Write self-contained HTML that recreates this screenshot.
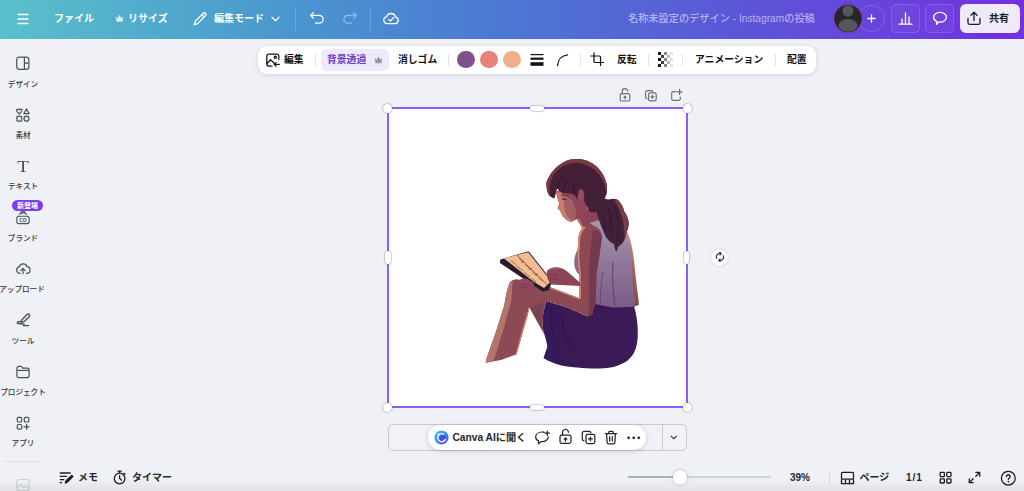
<!DOCTYPE html>
<html lang="ja">
<head>
<meta charset="utf-8">
<title>Canva</title>
<style>
*{box-sizing:border-box;margin:0;padding:0}
html,body{width:1024px;height:491px;overflow:hidden}
body{background:#eff1f6;font-family:"Liberation Sans","Noto Sans CJK JP",sans-serif;color:#0e1318;position:relative}
.abs{position:absolute}
#hdr{position:absolute;left:0;top:0;width:1024px;height:39px;background:linear-gradient(90deg,#5ac0cb 0%,#4a95cf 29%,#4c78d3 49%,#5c55d8 73%,#7330df 100%)}
#hdr .t{position:absolute;color:#fff;font-size:10px;font-weight:700;line-height:14px;white-space:nowrap;top:12.400px}
#hdr svg{position:absolute}
.sb{position:absolute;left:0;width:46px;text-align:center;font-size:7.600px;font-weight:500;color:#33383f;white-space:nowrap;line-height:10px}
.sbi{position:absolute}
#tb{position:absolute;left:258px;top:45.500px;width:558px;height:28px;background:#fff;border-radius:9px;box-shadow:0 1px 5px rgba(60,70,100,.18)}
#tb .t{position:absolute;font-size:9.800px;font-weight:700;line-height:14px;top:7.500px;white-space:nowrap;color:#0e1318}
#tb .sep{position:absolute;top:8px;width:1px;height:12px;background:#e1e3e9}
.hc{position:absolute;width:9px;height:9px;border-radius:50%;background:#fff;box-shadow:0 0 0 .500px rgba(120,128,145,.55),0 0 2px rgba(40,50,70,.3)}
.hp{position:absolute;border-radius:3px;background:#fff;box-shadow:0 0 0 .500px rgba(120,128,145,.5),0 0 2px rgba(40,50,70,.25)}
.bt{position:absolute;font-size:10px;font-weight:700;line-height:14px;white-space:nowrap;color:#25282e}
</style>
</head>
<body>
<!-- HEADER -->
<div id="hdr">
  <svg style="left:17px;top:13px" width="12" height="12" viewBox="0 0 12 12" fill="none" stroke="#fff" stroke-width="1.300" stroke-linecap="round"><path d="M1 1.500h10M1 6h10M1 10.500h10"/></svg>
  <div class="t" style="left:54px">ファイル</div>
  <!-- crown -->
  <svg style="left:115px;top:14px;opacity:.75" width="9" height="9" viewBox="0 0 9 9"><path d="M0.600 2.200 L2.600 4.200 L4.500 0.800 L6.400 4.200 L8.400 2.200 L7.500 7.800 H1.500 Z" fill="#fff"/></svg>
  <div class="t" style="left:128px">リサイズ</div>
  <!-- pencil -->
  <svg style="left:192px;top:11px" width="16" height="16" viewBox="0 0 16 16" fill="none" stroke="#fff" stroke-width="1.250" stroke-linejoin="round" stroke-linecap="round"><path d="M11.300 2.300a1.500 1.500 0 0 1 2.200 2.200L5.700 12.600 2.200 13.700 3.300 10.200Z"/><path d="M9.900 3.800l2.200 2.200"/></svg>
  <div class="t" style="left:214px">編集モード</div>
  <svg style="left:271px;top:16px" width="9" height="6" viewBox="0 0 9 6" fill="none" stroke="#fff" stroke-width="1.300" stroke-linecap="round" stroke-linejoin="round"><path d="M1 1.200l3.500 3.500L8 1.200"/></svg>
  <div class="abs" style="left:295px;top:8px;width:1px;height:23px;background:rgba(255,255,255,.18)"></div>
  <!-- undo -->
  <svg style="left:309px;top:11px" width="16" height="14" viewBox="0 0 16 14" fill="none" stroke="#fff" stroke-width="1.300" stroke-linecap="round" stroke-linejoin="round"><path d="M4.300 1.800L1.700 4.400l2.600 2.600"/><path d="M2 4.400h8.200a3.900 3.900 0 0 1 0 7.800H6.600"/></svg>
  <!-- redo -->
  <svg style="left:342px;top:11px;opacity:.38" width="16" height="14" viewBox="0 0 16 14" fill="none" stroke="#fff" stroke-width="1.300" stroke-linecap="round" stroke-linejoin="round"><path d="M11.700 1.800l2.600 2.600-2.600 2.600"/><path d="M14 4.400H5.800a3.900 3.900 0 0 0 0 7.800h3.600"/></svg>
  <div class="abs" style="left:370px;top:8px;width:1px;height:23px;background:rgba(255,255,255,.18)"></div>
  <!-- cloud check -->
  <svg style="left:382px;top:11px" width="18" height="15" viewBox="0 0 18 15" fill="none" stroke="#fff" stroke-width="1.300" stroke-linecap="round" stroke-linejoin="round"><path d="M5.200 12.600a3.400 3.400 0 0 1-.6-6.750 4.600 4.600 0 0 1 8.900.2 3.300 3.300 0 0 1-.4 6.550z"/><path d="M6.700 8.400l1.700 1.700 3.300-3.600"/></svg>
  <div class="t" style="left:628px;font-weight:500;font-size:10.200px;color:rgba(255,255,255,.55)">名称未設定のデザイン - Instagramの投稿</div>
  <!-- plus circle -->
  <div class="abs" style="left:858px;top:5px;width:27px;height:27px;border-radius:50%;border:1px solid rgba(255,255,255,.16)"></div>
  <svg style="left:867px;top:14px" width="9" height="9" viewBox="0 0 9 9" stroke="#fff" stroke-width="1.300" stroke-linecap="round"><path d="M4.500 .8v7.400M.8 4.500h7.400"/></svg>
  <!-- avatar -->
  <svg style="left:833px;top:4px" width="30" height="30" viewBox="0 0 30 30"><defs><clipPath id="avc"><circle cx="15" cy="14.500" r="13.400"/></clipPath></defs><circle cx="15" cy="14.500" r="14" fill="#6a2748"/><circle cx="15" cy="14.500" r="13.300" fill="#25262b"/><g clip-path="url(#avc)" fill="#55565b"><ellipse cx="15" cy="7" rx="5.600" ry="5.800"/><ellipse cx="15" cy="21.500" rx="9.500" ry="6.500"/></g></svg>
  <!-- chart btn -->
  <div class="abs" style="left:891px;top:4px;width:29px;height:29px;border-radius:5px;border:1px solid rgba(255,255,255,.14);background:rgba(255,255,255,.04)"></div>
  <svg style="left:898px;top:11px" width="15" height="15" viewBox="0 0 15 15" fill="none" stroke="#fff" stroke-width="1.300" stroke-linecap="round"><path d="M1 13.200h13M4 12.500V8M7.500 12.500V2M11 12.500V6"/></svg>
  <!-- comment btn -->
  <div class="abs" style="left:925px;top:4px;width:29px;height:29px;border-radius:5px;border:1px solid rgba(255,255,255,.14);background:rgba(255,255,255,.04)"></div>
  <svg style="left:932px;top:11px" width="16" height="15" viewBox="0 0 16 15" fill="none" stroke="#fff" stroke-width="1.300" stroke-linejoin="round"><path d="M8 1.300c3.600 0 6.400 2.100 6.400 4.900S11.600 11.100 8 11.100c-.5 0-1-.05-1.500-.13L4.600 13.400v-3C2.800 9.500 1.600 8 1.600 6.200 1.600 3.400 4.400 1.300 8 1.300z"/></svg>
  <!-- share btn -->
  <div class="abs" style="left:960px;top:4px;width:60px;height:29px;border-radius:6px;background:#efe9fb"></div>
  <svg style="left:966px;top:11px" width="16" height="15" viewBox="0 0 16 15" fill="none" stroke="#1a1d22" stroke-width="1.300" stroke-linecap="round" stroke-linejoin="round"><path d="M8 9.500V1.500M5 4.300l3-3 3 3"/><path d="M2 7.500v4.300a1.500 1.500 0 0 0 1.500 1.500h9a1.500 1.500 0 0 0 1.500-1.500V7.500"/></svg>
  <div class="t" style="left:989px;color:#1a1d22">共有</div>
</div>

<!-- SIDEBAR -->
<svg class="sbi" style="left:15px;top:55px" width="16" height="16" viewBox="0 0 16 16" fill="none" stroke="#4b5058" stroke-width="1.200" stroke-linejoin="round"><rect x="1.700" y="2.100" width="12.200" height="12.200" rx="2.600"/><path d="M9.400 2.100v12.200M9.400 8.200h4.500"/></svg>
<div class="sb" style="top:79.7px">デザイン</div>
<svg class="sbi" style="left:15px;top:107px" width="16" height="16" viewBox="0 0 16 16" fill="none" stroke="#4b5058" stroke-width="1.200" stroke-linejoin="round"><path d="M4.300 7L2 4.600C1.100 3.600 1.500 2.200 2.700 2.100 3.400 2 4 2.400 4.300 3 4.600 2.400 5.200 2 5.900 2.100 7.100 2.200 7.500 3.600 6.600 4.600Z"/><path d="M11.500 2L14.200 6.600H8.800Z"/><rect x="1.900" y="9.300" width="4.800" height="4.800" rx=".6"/><circle cx="11.500" cy="11.700" r="2.500"/></svg>
<div class="sb" style="top:130.7px">素材</div>
<div class="sbi" style="left:13px;top:157.500px;width:20px;text-align:center;font-family:'Liberation Serif',serif;font-size:16.500px;line-height:18px;color:#4b5058;transform:scaleX(1.160)">T</div>
<div class="sb" style="top:181.7px">テキスト</div>
<div class="abs" style="left:12px;top:200px;width:31px;height:11px;border-radius:6px;background:#7d3cf0;color:#fff;font-size:7px;font-weight:700;line-height:11px;text-align:center;white-space:nowrap">新登場</div>
<svg class="sbi" style="left:15px;top:210px" width="16" height="15" viewBox="0 0 16 15" fill="none" stroke="#4b5058" stroke-width="1.100" stroke-linejoin="round" stroke-linecap="round"><rect x="1.800" y="6.200" width="12.400" height="7.400" rx="2.200"/><path d="M4.200 4.400a6.500 6.500 0 0 1 7.600 0M5.600 2.300a5 5 0 0 1 4.800 0"/><text x="8" y="11.900" text-anchor="middle" font-family="Liberation Sans,sans-serif" font-size="5" font-weight="700" fill="#4b5058" stroke="none">CO</text></svg>
<div class="sb" style="top:233.7px">ブランド</div>
<svg class="sbi" style="left:15px;top:261px" width="16" height="15" viewBox="0 0 16 15" fill="none" stroke="#4b5058" stroke-width="1.200" stroke-linejoin="round" stroke-linecap="round"><path d="M5 12.400a3.300 3.300 0 0 1-.8-6.500 4 4 0 0 1 7.700-.2 3.300 3.300 0 0 1-.3 6.600"/><path d="M8 12.800V7.600M5.800 9.600L8 7.400l2.200 2.200"/></svg>
<div class="sb" style="top:284.7px;left:-1px">アップロード</div>
<svg class="sbi" style="left:15px;top:312px" width="17" height="16" viewBox="0 0 17 16" fill="none" stroke="#4b5058" stroke-width="1.350" stroke-linejoin="round" stroke-linecap="round"><path d="M12.300 2.300a1.500 1.500 0 0 1 2.100 2.100L9 9.800 6.400 10.400 7 7.800Z"/><path d="M6.600 9.600C4 9.400 2.200 9.800 2.200 10.800c0 1.600 4.500 .4 6.500 1.400.9 .5 .5 1.400-.3 1.400H13.600"/></svg>
<div class="sb" style="top:336.7px">ツール</div>
<svg class="sbi" style="left:15px;top:364px" width="16" height="15" viewBox="0 0 16 15" fill="none" stroke="#4b5058" stroke-width="1.200" stroke-linejoin="round"><path d="M1.900 4.400a2 2 0 0 1 2-2h2.200l1.600 1.800h4.400a2 2 0 0 1 2 2v5.400a2 2 0 0 1-2 2H3.900a2 2 0 0 1-2-2z"/><path d="M1.900 6.400h12.200"/></svg>
<div class="sb" style="top:387.7px">プロジェクト</div>
<svg class="sbi" style="left:15px;top:415px" width="16" height="16" viewBox="0 0 16 16" fill="none" stroke="#4b5058" stroke-width="1.200" stroke-linejoin="round" stroke-linecap="round"><rect x="2.200" y="2.400" width="4.600" height="4.600" rx="1.300"/><rect x="9.300" y="2.400" width="4.600" height="4.600" rx="1.300"/><rect x="2.200" y="9.500" width="4.600" height="4.600" rx="1.300"/><path d="M11.600 9.300v5M9.100 11.800h5"/></svg>
<div class="sb" style="top:438.7px">アプリ</div>
<div class="abs" style="left:4px;top:461px;width:37px;height:1px;background:#dcdfe6"></div>
<svg class="sbi" style="left:15px;top:477px;opacity:.2" width="16" height="15" viewBox="0 0 16 15" fill="none" stroke="#4b5058" stroke-width="1.200" stroke-linejoin="round"><rect x="1.800" y="2.500" width="12.400" height="11" rx="2"/><path d="M2 11l3.500-3.500 3 3 2-2 3.500 3.500"/></svg>

<!-- TOOLBAR -->
<div id="tb">
  <svg class="abs" style="left:7px;top:6px" width="16" height="16" viewBox="0 0 16 16" fill="none" stroke="#0e1318" stroke-width="1.250" stroke-linejoin="round" stroke-linecap="round"><path d="M13.800 7.500V4a2 2 0 0 0-2-2H3.800a2 2 0 0 0-2 2v8a2 2 0 0 0 2 2H7"/><circle cx="10.300" cy="5.300" r="1.100"/><path d="M2 11.500l3.600-3.800 3.600 3.600"/><path d="M9.300 12.300h5M11 10.600l-1.800 1.700 1.800 1.700"/></svg>
  <div class="t" style="left:26px">編集</div>
  <div class="sep" style="left:57px"></div>
  <div class="abs" style="left:63px;top:3px;width:68px;height:22px;border-radius:5px;background:#efe9fd"></div>
  <div class="t" style="left:69px;color:#6a3fc4">背景透過</div>
  <svg class="abs" style="left:116px;top:10px" width="9" height="8" viewBox="0 0 9 8"><path d="M0.600 1.700 L2.600 3.700 L4.500 0.500 L6.400 3.700 L8.400 1.700 L7.500 7.200 H1.500 Z" fill="#9a94aa"/></svg>
  <div class="t" style="left:140px">消しゴム</div>
  <div class="sep" style="left:190px"></div>
  <div class="abs" style="left:199.2px;top:5.200px;width:17.600px;height:17.600px;border-radius:50%;background:#82508a"></div>
  <div class="abs" style="left:222.2px;top:5.200px;width:17.600px;height:17.600px;border-radius:50%;background:#e8837a"></div>
  <div class="abs" style="left:245.2px;top:5.200px;width:17.600px;height:17.600px;border-radius:50%;background:#f0b08a"></div>
  <svg class="abs" style="left:272px;top:7px" width="14" height="14" viewBox="0 0 14 14" fill="#0e1318"><rect x=".5" y="1" width="13" height="1.200"/><rect x=".5" y="4.600" width="13" height="2.200"/><rect x=".5" y="9.200" width="13" height="3.600"/></svg>
  <svg class="abs" style="left:298px;top:7px" width="14" height="14" viewBox="0 0 14 14" fill="none" stroke="#0e1318" stroke-width="1.300" stroke-linecap="round"><path d="M1.600 12.600C2 6.600 5.800 2.400 11.600 1.800"/></svg>
  <div class="sep" style="left:322px"></div>
  <svg class="abs" style="left:332px;top:6.500px" width="14.500" height="14.500" viewBox="0 0 16 16" fill="none" stroke="#0e1318" stroke-width="1.350" stroke-linecap="round" stroke-linejoin="round"><path d="M4.400 1v9.400a1.200 1.200 0 0 0 1.200 1.200H15"/><path d="M1 4.400h9.400a1.200 1.200 0 0 1 1.200 1.200V15"/></svg>
  <div class="t" style="left:359px">反転</div>
  <div class="sep" style="left:390px"></div>
  <svg class="abs" style="left:400px;top:6px" width="15" height="15" viewBox="0 0 15 15"><g fill="#0e1318"><rect x="0" y="0" width="3" height="3"/><rect x="0" y="6" width="3" height="3"/><rect x="0" y="12" width="3" height="3"/><rect x="3" y="3" width="3" height="3" opacity=".8"/><rect x="3" y="9" width="3" height="3" opacity=".8"/><rect x="6" y="0" width="3" height="3" opacity=".5"/><rect x="6" y="6" width="3" height="3" opacity=".5"/><rect x="6" y="12" width="3" height="3" opacity=".5"/><rect x="9" y="3" width="3" height="3" opacity=".28"/><rect x="9" y="9" width="3" height="3" opacity=".28"/><rect x="12" y="0" width="3" height="3" opacity=".12"/><rect x="12" y="6" width="3" height="3" opacity=".12"/><rect x="12" y="12" width="3" height="3" opacity=".12"/></g></svg>
  <div class="sep" style="left:424px"></div>
  <div class="t" style="left:437px">アニメーション</div>
  <div class="sep" style="left:517px"></div>
  <div class="t" style="left:529px">配置</div>
</div>

<!-- CANVAS -->
<div class="abs" id="cv" style="left:387px;top:107px;width:301px;height:301px;background:#fff;border:2px solid #8f5bfa"></div>
<!--ILLUS-START-->
<svg class="abs" style="left:470px;top:150px;filter:blur(.350px)" width="190" height="230" viewBox="470 150 190 230">
<defs>
<linearGradient id="topg" x1="0" y1="0" x2="0" y2="1"><stop offset="0" stop-color="#a697b0"/><stop offset=".45" stop-color="#8f7a9b"/><stop offset="1" stop-color="#7b5c87"/></linearGradient>
<linearGradient id="skg" x1="0" y1="0" x2="1" y2="0"><stop offset="0" stop-color="#35195c"/><stop offset=".35" stop-color="#3a1a52"/><stop offset="1" stop-color="#3b1b58"/></linearGradient>
<linearGradient id="bsg" x1="0" y1="0" x2="0" y2="1"><stop offset="0" stop-color="#d39a88"/><stop offset=".5" stop-color="#a8665c"/><stop offset="1" stop-color="#864848"/></linearGradient>
</defs>
<!-- back skin strip (behind top) -->
<path d="M622 226 C627 229.500 630 236 632.500 250 C634.500 262 635.500 278 638.600 300 L638.800 305 L634 306.500 L629 260 Z" fill="url(#bsg)"/>
<!-- neck -->
<path d="M576 218 L586 209 L598 206 L600 228 L584 231 L581 226 Z" fill="#8c4558"/>
<path d="M576.500 218.500 L582 227.500 L583.500 227 L578.500 218 Z" fill="#c9786a"/>
<!-- top -->
<path d="M589.500 223 L598 220.500 L622 224 C627 231 629.500 242 631 258 C632 270 632.500 282 633.500 292 L635 307.300 L613 308 L594.500 304.500 L596.500 274 L599.500 256 L602 238 C600 231 595 226 589.500 223 Z" fill="url(#topg)"/>
<path d="M613 262 C612 278 613 292 615 306" fill="none" stroke="#5f3c6a" stroke-width=".9"/>
<path d="M603 272 C601 284 600 294 600.500 304" fill="none" stroke="#62406e" stroke-width=".8"/>
<!-- chest bump -->
<path d="M579 248 C575.500 252 574 258 574.300 264 C574.600 269 577 273 579.500 275 L581 262 Z" fill="#8a6792"/>
<!-- skirt -->
<path d="M546 301 L567.500 307.500 L587.600 316.600 L595 304 L613 307.500 L634 306.800 C636.500 314 637.800 324 637.800 333 C637.800 341.500 636.500 349 633 354.500 C630 359 626 362 622 363.800 C617 366.500 610 368 604 368.300 C597 368.600 590 368.500 586 368.200 C575 367.600 562 366 558 364.500 C552 362.500 546 360 543.500 358 C545 353 547 349 547.300 346 C546 338 543 332 542.700 326 C542.400 320 543 314 543.700 311 Z" fill="url(#skg)"/>
<path d="M551 306 C549 318 551 330 556 340 M561 312 C562 326 566 338 572 348" fill="none" stroke="#2a1246" stroke-width="1.100"/>
<!-- far thigh (dark) -->
<path d="M528.500 306 L546 300 L543.700 311 C543 316 542.400 322 542.700 326 L544 334 Z" fill="#7a4152"/>
<!-- leg / shin -->
<path d="M509.400 282.700 C511 280.500 514 279.300 517 279.300 L534 283 L547 300.500 L528.900 308 L528 314.400 L523.200 330.700 L516.600 354.300 L501 360 L485.700 362.800 L486.500 358.400 L496.300 330.700 L504.400 304.700 C505.500 297 507 290 509.400 282.700 Z" fill="#8c4a54"/>
<path d="M509.400 282.700 C507 290 505.500 297 504.400 304.700 L496.300 330.700 L486.500 358.400 L485.700 362.800 L493.500 361.300 L503 331 L511.500 300 C512 293 512 287 512.500 281 Z" fill="#b4746c"/>
<path d="M528.900 308 L528 314.400 L523.200 330.700 L516.600 354.300 L515.300 354.700 L522 330 L527 313 Z" fill="#cf7f63"/>
<!-- near arm -->
<path d="M584 226.500 C588 224.500 594 225 598 228 C601 231 602.500 234.500 602 238 L599.500 256 L596.600 274 L595.700 299.700 L595 304 L592.200 314.800 L587.600 316.600 L567.500 307.500 L546 301 L534 292 L520.500 290 L518.500 282 L524 279.500 L535 282 L551 287.500 L579.400 298.300 L579.200 274 L577.400 255.800 L578.300 237.500 C579 232.500 581 229 584 226.500 Z" fill="#8c4853"/>
<path d="M593 229.500 C597 229 600.500 232 602 238 L599.500 256 L596.600 274 L595.700 299.700 L595 304 L592.200 314.800 L588.500 315.500 L589.500 296 L589 272 L590.500 250 Z" fill="#733a4c"/>
<path d="M584 226.500 C581 229 579 232.500 578.300 237.500 L577.400 255.800 L579.200 274 L579.400 298.300 L581 298.800 L580.800 274 L579.200 256 L580.300 238 C581 233 583 229.500 586 227.500 Z" fill="#d28a6c"/>
<path d="M535 282 L551 287.500 L579.400 298.300 L580 299.800 L551 289 L535 283.300 Z" fill="#c47866"/>
<!-- tablet -->
<path d="M500.300 259.400 L528.600 251.200 L552.200 281 L549 290 L543 291.800 L531.300 284 L500 263 Z" fill="#2a1c2c"/>
<path d="M503.800 258.300 L528.200 252.300 L551.200 281.200 L544 288 L533.100 281.200 Z" fill="#f2bd92"/>
<path d="M517 255.300 L547 284.500" stroke="#5a3a3a" stroke-width=".7" fill="none"/>
<path d="M511 260.500l5.500 4.400M519 258.500l5 4.300M517 266l6 5M525 264.500l5.500 4.800M524 272l6 5M532 271.500l5 4.500M531 278l5 4M538.500 277.500l4.500 4M521 262.500l3 -1M529 269.500l3 -1M535 275l3 -1" stroke="#7a4a3e" stroke-width=".7" fill="none"/>
<!-- far hand on tablet right -->
<path d="M546.800 271 C549 268 553 266.800 557 267.200 C561 267.600 564 269 567 271.200 L580.500 283 L580.500 286 L551 284.400 C548.500 282 546.500 277 546.800 271 Z" fill="#8c4558"/>
<path d="M547.200 271.200 C550 268.600 554 267.600 558 268" stroke="#c9786a" stroke-width=".8" fill="none"/>
<path d="M549 274.500l8 1.800M550 278l8 1.600" stroke="#5c2b42" stroke-width=".6" fill="none"/>
<!-- near hand fingers -->
<path d="M519 280.500 C521.500 278.200 525 278 528 279.200 L534 283 L533 291 L524 292.500 C520.500 291 518.300 287 519 280.500 Z" fill="#91485a"/>
<path d="M520.500 283.500l7 1.500M521 286.500l6.500 1.200" stroke="#5c2b42" stroke-width=".6" fill="none"/>
<!-- face -->
<path d="M555.700 192 L556.800 194.800 L557.800 199 L559.300 203.400 L557.700 208.300 L560 210.500 L561.400 213.300 L562.500 216 L566.400 219.800 L570.700 221.900 L577.600 218.700 L587 211 L587 188 L570 184 Z" fill="#8f4659"/>
<path d="M555.700 192 L556.800 194.800 L557.800 199 L559.300 203.400 L557.700 208.300 L560 210.500 L561.400 213.300 L562.500 216 L566.400 219.800 L570.700 221.900 L575.500 219.500 L576 210 L573 201 L566 196 L560.500 191.500 Z" fill="#a55e62"/>
<path d="M555.700 192 L556.800 194.800 L557.800 199 L559.300 203.400 L557.700 208.300 L560 210.500 L561.400 213.300 L562.500 216 L566.400 219.800 L570.700 221.900 L573 221 L568.500 217.800 L566 214 L564.800 210 L564 206 L564.500 202 L562.500 197.500 L561.500 192.500 Z" fill="#c97d6d"/>
<path d="M561.600 198.300 C563 199.900 565 200 566.500 199.200" stroke="#3a1830" stroke-width="1" fill="none"/>
<path d="M560.500 195.400 C562.500 194.500 565 194.600 567 195.500" stroke="#4a2236" stroke-width=".7" fill="none"/>
<!-- ear -->
<path d="M579 190.500 C581.500 189 584 190.500 584 194 C584 197.500 582 201 579.500 201.500 C578 199 577.800 193 579 190.500 Z" fill="#9a4c5c"/>
<!-- ponytail -->
<path d="M597 200 C600 197 603 198 605 198.500 C607 199.500 608.500 199.500 610 199.300 C612 198.600 614.500 198.600 616.400 199.300 C618.500 200.200 619.800 201.800 620.600 203.500 C622.500 205.500 623.500 208.500 624.200 211.400 C626 213.500 627.200 216 627.700 218.500 C628.800 221 628.900 223.500 628.500 225.600 C628.300 228.500 627.300 230.800 626.300 232.700 C626 235.500 625.200 238 624.200 239.900 C623.300 242 622 243.600 620.600 244.800 C619.800 245.800 618.800 246.600 617.800 247 C617.800 248.800 617.200 250.500 616.400 251.500 C615.700 251 615.200 250 614.900 249.100 C614.400 247.500 614.200 245.800 614.200 244.100 C611.500 243 609 241 607.100 238.400 C605.500 236.500 604.200 234 603.500 231.300 C602 228.500 600.800 225.600 600 222.800 C598.700 220 597.700 217 597.100 214.200 C596.500 211.800 596.300 209.500 596.400 207.100 Z" fill="#43203a"/>
<path d="M616.400 199.300 C618.500 200.200 619.800 201.800 620.600 203.500 C622.500 205.500 623.500 208.500 624.200 211.400 C626 213.500 627.200 216 627.700 218.500 C628.800 221 628.900 223.500 628.500 225.600 C628.300 228.500 627.300 230.800 626.300 232.700 C626 235.500 625.200 238 624.200 239.900 C624.500 236 624.600 232 624 228 C623.500 223 622.500 218 620.500 213 C619 208.500 617.500 204.500 614.500 201 C615 200 615.700 199.500 616.400 199.300 Z" fill="#7c3a42"/>
<path d="M608 208 C611 216 612.500 226 611 236 M614 205 C618 214 619.500 227 617 240 M602.500 212 C604 219 605 226 605 232" fill="none" stroke="#2e1228" stroke-width=".8"/>
<!-- hair cap -->
<path d="M546.400 182.700 C546.800 180.800 547.500 179.200 548.600 177.700 C549.700 175.300 551 173.200 552.800 171.300 C554.400 169.200 556.300 167.300 558.500 165.600 C560.800 163.700 563.400 162.100 566.400 160.800 C569.300 159.800 572.400 159.300 575.700 159.100 C579.100 159 582.400 159.400 585.600 160.300 C588.700 161.300 591.600 162.800 594.200 164.800 C597 166.800 599.400 169.200 601.300 172 C603.200 174.600 604.600 177.400 605.600 180.500 C606.500 182.800 606.900 185.200 607 187.700 C607.100 190.200 606.900 192.600 606.300 194.800 C605.800 196.400 605.100 197.800 604.200 199.100 C604 204 602 208.500 599 211 C596.500 212.500 593.500 212.500 590.500 212.300 C588.500 210 587.500 208 587 206.200 C585.500 204.500 584.700 202.500 584.200 200.500 C584.300 197 584.300 193 583.500 190.800 C582 189 580.300 188.800 579.200 189.400 C578.300 192 577.800 195.500 577.300 199.300 C576.600 199 576.200 198 575.700 196.800 C575 195.800 574.500 195 574.200 194.800 C572.500 193.800 570.500 193.500 568.500 193.400 C566.500 193.200 564.500 192.800 562.800 192.700 C561 192 559 190.500 557.100 188.400 C556.800 190 556.200 191.800 555.700 193.400 C555.500 195.200 555 197 554.300 198.400 C552.700 198 551.200 197.200 550 196.200 C548.600 194.500 547.600 192.600 547.100 190.500 C546.600 188 546.300 185.300 546.400 182.700 Z" fill="#431f38"/>
<path d="M546.400 182.700 C546.800 180.800 547.500 179.200 548.600 177.700 C549.700 175.300 551 173.200 552.800 171.300 C554.400 169.200 556.300 167.300 558.500 165.600 C560.800 163.700 563.400 162.100 566.400 160.800 C569.300 159.800 572.400 159.300 575.700 159.100 C579.100 159 582.400 159.400 585.600 160.300 C588.700 161.300 591.600 162.800 594.200 164.800 C597 166.800 599.400 169.200 601.300 172 C603.200 174.600 604.600 177.400 605.600 180.500 C606.500 182.800 606.900 185.200 607 187.700 C607.100 190.200 606.900 192.600 606.300 194.800 C606 190.500 605.200 186.500 603.800 182.800 C602 178 599 173.800 595 170.300 C591 167 586 164.200 580 163.200 C574.500 162.300 569 163 564 165.500 C559.500 167.800 556 171 553.500 175 C551.500 178.200 550.300 181.700 549.800 185.300 C549.400 188.500 549.500 191.500 550.200 194.500 C550.600 195.200 549.800 195.900 550 196.200 C548.600 194.500 547.600 192.600 547.100 190.500 C546.600 188 546.300 185.300 546.400 182.700 Z" fill="#7c3942"/>
<path d="M557.100 188.400 C558 184 560 180 563 177 M562.800 192.700 C563 188 565 183.500 568.500 180 M574.200 194.800 C573 190 573.500 185 576 180.500" fill="none" stroke="#2e1228" stroke-width=".8"/>
</svg>
<!--ILLUS-END-->
<!-- handles -->
<div class="hc" style="left:383.300px;top:103.700px"></div>
<div class="hc" style="left:682.500px;top:103.700px"></div>
<div class="hc" style="left:383.300px;top:402.700px"></div>
<div class="hc" style="left:682.500px;top:402.700px"></div>
<div class="hp" style="left:530.300px;top:105.700px;width:13.400px;height:5.400px"></div>
<div class="hp" style="left:530.300px;top:404.600px;width:13.400px;height:5.400px"></div>
<div class="hp" style="left:385.200px;top:251px;width:5.400px;height:13.400px"></div>
<div class="hp" style="left:684.100px;top:251px;width:5.400px;height:13.400px"></div>
<!-- icons above canvas -->
<svg class="abs" style="left:618px;top:87px" width="14" height="16" viewBox="0 0 14 16" fill="none" stroke="#6a6e76" stroke-width="1.150" stroke-linejoin="round" stroke-linecap="round"><rect x="2.200" y="6.600" width="9.600" height="7.400" rx="1.600"/><path d="M4.300 6.400V4.600a2.700 2.700 0 0 1 5.400-.5"/><path d="M7 12V9.300M5.900 10.300L7 9.200l1.100 1.100"/></svg>
<svg class="abs" style="left:644px;top:89px" width="14" height="13" viewBox="0 0 14 13" fill="none" stroke="#6a6e76" stroke-width="1.150" stroke-linejoin="round" stroke-linecap="round"><rect x="4.600" y="3.800" width="7.600" height="8" rx="1.600"/><path d="M3 9.600a1.500 1.500 0 0 1-1.400-1.500V3.200a1.600 1.600 0 0 1 1.600-1.600h4.400a1.500 1.500 0 0 1 1.500 1.200"/><path d="M8.400 6.200v3.200M6.800 7.800H10"/></svg>
<svg class="abs" style="left:670px;top:88px" width="14" height="14" viewBox="0 0 14 14" fill="none" stroke="#6a6e76" stroke-width="1.150" stroke-linejoin="round" stroke-linecap="round"><path d="M5.600 3.600H3.300a1.600 1.600 0 0 0-1.600 1.600v5.600a1.600 1.600 0 0 0 1.600 1.600h5.400a1.600 1.600 0 0 0 1.600-1.600V9"/><path d="M9.600 1.200v5.200M7 3.800h5.200"/></svg>
<!-- rotate -->
<div class="abs" style="left:710.800px;top:248.600px;width:17.600px;height:17.600px;border-radius:50%;background:#fff;box-shadow:0 0 2px rgba(40,50,70,.3)"></div>
<svg class="abs" style="left:714.600px;top:252.400px" width="10" height="10" viewBox="0 0 10 10" fill="none" stroke="#33383f" stroke-width="1.200" stroke-linecap="round" stroke-linejoin="round"><path d="M1.700 6.300A3.400 3.400 0 0 1 6 1.700"/><path d="M4.900 .5L6.200 1.700 4.900 3"/><path d="M8.300 3.700A3.400 3.400 0 0 1 4 8.300"/><path d="M5.100 7L3.800 8.300l1.300 1.200"/></svg>
<!-- bottom floating toolbar -->
<div class="abs" style="left:387.500px;top:424px;width:299.500px;height:27px;border:1px solid #c6c9d0;border-radius:5px;background:#f1f2f7"></div>
<div class="abs" style="left:662px;top:424.500px;width:1px;height:26px;background:#c6c9d0"></div>
<svg class="abs" style="left:670.300px;top:434.500px" width="7.500" height="5" viewBox="0 0 9 6" fill="none" stroke="#33383f" stroke-width="1.300" stroke-linecap="round" stroke-linejoin="round"><path d="M1.300 1.300l3.200 3.200 3.200-3.200"/></svg>
<div class="abs" style="left:428.400px;top:425.200px;width:218px;height:24.500px;border-radius:12.500px;background:#fff;box-shadow:0 1px 5px rgba(50,60,90,.22)"></div>
<svg class="abs" style="left:433.500px;top:430px" width="15" height="15" viewBox="0 0 15 15"><defs><linearGradient id="cg" x1="0" y1="0" x2="1" y2="1"><stop offset="0" stop-color="#3fd3f4"/><stop offset=".5" stop-color="#2f8ef2"/><stop offset="1" stop-color="#5a4af0"/></linearGradient></defs><circle cx="7.500" cy="7.500" r="7.100" fill="url(#cg)"/><circle cx="8.600" cy="8" r="3.300" fill="#4a4df0"/><path d="M9.800 4.200A4 4 0 1 0 11.400 9.400" fill="none" stroke="#fff" stroke-width="1.300" stroke-linecap="round"/><path d="M4.200 2.800l.4 1 .9.400-.9.400-.4 1-.4-1-.9-.4.900-.4z" fill="#fff"/></svg>
<div class="abs" style="left:452.500px;top:431px;font-size:10.200px;font-weight:700;line-height:14px;white-space:nowrap;color:#24272c">Canva AIに聞く</div>
<svg class="abs" style="left:534px;top:429.500px" width="17" height="16" viewBox="0 0 17 16" fill="none" stroke="#24272c" stroke-width="1.250" stroke-linejoin="round" stroke-linecap="round"><path d="M10.200 2.300A7.500 7.500 0 0 0 8 2C4.400 2 1.700 4.100 1.700 6.900c0 1.700 1.100 3.200 2.800 4v3l2.400-2.300c.4.050.7.070 1.100.07 3.600 0 6.300-2.100 6.300-4.800"/><path d="M13.300 1v4.400M11.100 3.200h4.400"/></svg>
<svg class="abs" style="left:557.500px;top:428px" width="15" height="17" viewBox="0 0 15 17" fill="none" stroke="#24272c" stroke-width="1.250" stroke-linejoin="round" stroke-linecap="round"><rect x="2" y="7" width="11" height="8.400" rx="1.800"/><path d="M4.500 6.800V4.800a3 3 0 0 1 6-.6"/><path d="M7.500 13.200v-3.100M6.200 11.200l1.300-1.300 1.300 1.300"/></svg>
<svg class="abs" style="left:580.500px;top:430px" width="15" height="15" viewBox="0 0 15 15" fill="none" stroke="#24272c" stroke-width="1.250" stroke-linejoin="round" stroke-linecap="round"><rect x="5" y="4.300" width="8.800" height="9.200" rx="1.800"/><path d="M3 10.800a1.700 1.700 0 0 1-1.700-1.700V3.200a1.900 1.900 0 0 1 1.900-1.900h5a1.700 1.700 0 0 1 1.700 1.400"/><path d="M9.400 7v3.800M7.500 8.900h3.800"/></svg>
<svg class="abs" style="left:604px;top:429.500px" width="14" height="15" viewBox="0 0 14 15" fill="none" stroke="#24272c" stroke-width="1.250" stroke-linejoin="round" stroke-linecap="round"><path d="M1.300 3.600h11.400M4.700 3.400V2.500a1.200 1.200 0 0 1 1.200-1.200h2.200a1.200 1.200 0 0 1 1.200 1.200v.9"/><path d="M2.600 3.800l.5 8.400a1.800 1.800 0 0 0 1.800 1.700h4.200a1.800 1.800 0 0 0 1.800-1.700l.5-8.400"/><path d="M5.700 6.600v4.400M8.300 6.600v4.400"/></svg>
<svg class="abs" style="left:627px;top:435.500px" width="14" height="4" viewBox="0 0 14 4" fill="#24272c"><circle cx="1.600" cy="1.800" r="1.350"/><circle cx="6.700" cy="1.800" r="1.350"/><circle cx="11.800" cy="1.800" r="1.350"/></svg>

<!-- BOTTOM -->
<svg class="abs" style="left:59px;top:470.500px" width="15" height="13" viewBox="0 0 15 13" fill="none" stroke="#1a1d22" stroke-width="1.300" stroke-linecap="round" stroke-linejoin="round"><path d="M1.200 2h10M1.200 5.300h6.300M1.200 8.600h3.600M1.200 11.700h1.200"/><path d="M12 4.600a1.100 1.100 0 0 1 1.600 1.600L8.300 11.500l-2.300.7.700-2.300z" fill="#1a1d22" stroke-width="1"/></svg>
<div class="bt" style="left:78px;top:470.500px">メモ</div>
<svg class="abs" style="left:113px;top:469.500px" width="14" height="15" viewBox="0 0 14 15" fill="none" stroke="#1a1d22" stroke-width="1.300" stroke-linecap="round" stroke-linejoin="round"><circle cx="6.600" cy="8.500" r="5.300"/><path d="M6.600 5.600v3l1.900 1.500M5 1.200h3.200M6.600 1.400v1.700M11 3.300l.9.900"/></svg>
<div class="bt" style="left:132px;top:470.500px">タイマー</div>
<div class="abs" style="left:628.300px;top:476.400px;width:142.500px;height:1.900px;border-radius:1px;background:#ced2d9"></div>
<div class="abs" style="left:628.300px;top:476.200px;width:52px;height:2.300px;border-radius:1px;background:#a9afbb"></div>
<div class="abs" style="left:672.700px;top:470.300px;width:14.400px;height:14.400px;border-radius:50%;background:#fff;box-shadow:0 0 2.500px rgba(40,50,70,.4)"></div>
<div class="bt" style="left:790px;top:470.500px">39%</div>
<div class="abs" style="left:829px;top:472.500px;width:1px;height:10px;background:#d3d6dd"></div>
<svg class="abs" style="left:840px;top:470.500px" width="15" height="14" viewBox="0 0 15 14" fill="none" stroke="#1a1d22" stroke-width="1.300" stroke-linejoin="round"><rect x="1.500" y="1.400" width="12" height="6.800" rx="1"/><path d="M1.500 8.200v4.400h12V8.200M5.500 8.400v4.200M9.500 8.400v4.200"/></svg>
<div class="bt" style="left:859.500px;top:470.500px">ページ</div>
<div class="bt" style="left:906px;top:470.500px;letter-spacing:1px">1/1</div>
<svg class="abs" style="left:939px;top:471px" width="13" height="13" viewBox="0 0 13 13" fill="none" stroke="#1a1d22" stroke-width="1.300" stroke-linejoin="round"><rect x="1.200" y="1.400" width="4.200" height="4.200" rx=".8"/><rect x="7.800" y="1.400" width="4.200" height="4.200" rx=".8"/><rect x="1.200" y="7.800" width="4.200" height="4.200" rx=".8"/><rect x="7.800" y="7.800" width="4.200" height="4.200" rx=".8"/></svg>
<svg class="abs" style="left:968px;top:471px" width="13" height="13" viewBox="0 0 13 13" fill="none" stroke="#1a1d22" stroke-width="1.300" stroke-linecap="round" stroke-linejoin="round"><path d="M7.800 1.300h3.900v3.900M11.500 1.500L7.800 5.200M5.200 11.700H1.300V7.800M1.500 11.500l3.700-3.700"/></svg>
<svg class="abs" style="left:1000px;top:469.500px" width="17" height="17" viewBox="0 0 17 17" fill="none" stroke="#1a1d22" stroke-width="1.300" stroke-linecap="round" stroke-linejoin="round"><circle cx="8.300" cy="8.200" r="6.900"/><path d="M6.400 6.600a1.900 1.900 0 0 1 3.800.1c0 1.300-1.900 1.500-1.900 2.800"/><circle cx="8.300" cy="11.700" r=".5" fill="#1a1d22" stroke-width=".6"/></svg>
<div class="abs" style="left:0;top:479px;width:1024px;height:12px;background:linear-gradient(180deg,rgba(0,0,0,0),rgba(0,0,0,.06))"></div>
</body>
</html>
